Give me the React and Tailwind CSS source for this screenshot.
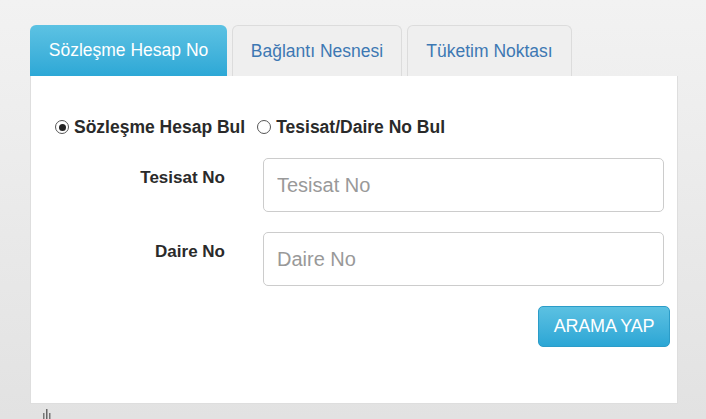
import React from "react";

function Radio({ checked }) {
  return (
    <span className="inline-flex h-[14px] w-[14px] items-center justify-center rounded-full border border-[#555] bg-white">
      {checked && <span className="h-[7px] w-[7px] rounded-full bg-[#222]" />}
    </span>
  );
}

export default function App() {
  const font = { fontFamily: '"Liberation Sans", Arial, sans-serif' };
  return (
    <div
      className="relative h-[419px] w-[706px] overflow-hidden bg-gradient-to-b from-[#f2f2f2] to-[#e2e2e2] pl-[30px] pt-[25px]"
      style={font}
    >
      {/* tabs */}
      <div className="flex h-[51px] items-stretch gap-[5px]">
        <div className="flex w-[197px] items-center justify-center rounded-t-[6px] bg-gradient-to-b from-[#5cc2e3] to-[#2ca8d6] text-[17.5px] text-white">
          Sözleşme Hesap No
        </div>
        <div className="flex w-[170px] items-center justify-center rounded-t-[6px] border border-b-0 border-[#dcdcdc] bg-[#efefef] text-[17.5px] text-[#3d78b3]">
          Bağlantı Nesnesi
        </div>
        <div className="flex w-[165px] items-center justify-center rounded-t-[6px] border border-b-0 border-[#dcdcdc] bg-[#efefef] text-[17.5px] text-[#3d78b3]">
          Tüketim Noktası
        </div>
      </div>

      {/* panel */}
      <div className="h-[328px] w-[648px] border border-t-0 border-[#dedede] bg-white pt-[41px]">
        <div className="flex h-[20px] items-center pl-[24px] text-[17.5px] font-bold text-[#2a2a2a]">
          <Radio checked />
          <span className="ml-[5px]">Sözleşme Hesap Bul</span>
          <span className="ml-[12px]" />
          <Radio />
          <span className="ml-[5px]">Tesisat/Daire No Bul</span>
        </div>

        <div className="mt-[21px] flex">
          <div className="w-[194px] pt-[8px] text-right text-[17px] font-bold leading-[24px] text-[#2a2a2a]">
            Tesisat No
          </div>
          <input
            className="ml-[38px] h-[54px] w-[401px] rounded-[5px] border border-[#cccccc] px-[13px] text-[20px] text-[#555] placeholder:text-[#999] outline-none"
            placeholder="Tesisat No"
            style={font}
          />
        </div>

        <div className="mt-[20px] flex">
          <div className="w-[194px] pt-[8px] text-right text-[17px] font-bold leading-[24px] text-[#2a2a2a]">
            Daire No
          </div>
          <input
            className="ml-[38px] h-[54px] w-[401px] rounded-[5px] border border-[#cccccc] px-[13px] text-[20px] text-[#555] placeholder:text-[#999] outline-none"
            placeholder="Daire No"
            style={font}
          />
        </div>

        <div className="mt-[20px] flex justify-end pr-[7px]">
          <button
            className="h-[41px] w-[132px] rounded-[5px] border border-[#2b9cc8] bg-gradient-to-b from-[#5bc1e2] to-[#2aa6d5] text-[18px] tracking-[-0.2px] text-white"
            style={font}
          >
            ARAMA YAP
          </button>
        </div>
      </div>

      {/* tiny glyph cut off at bottom */}
      <svg className="absolute left-[42px] top-[409px]" width="10" height="10" viewBox="0 0 10 10">
        <rect x="1" y="4" width="1.5" height="6" fill="#777" />
        <rect x="4" y="0" width="1.5" height="10" fill="#666" />
        <rect x="7" y="4" width="1.5" height="6" fill="#777" />
      </svg>
    </div>
  );
}
